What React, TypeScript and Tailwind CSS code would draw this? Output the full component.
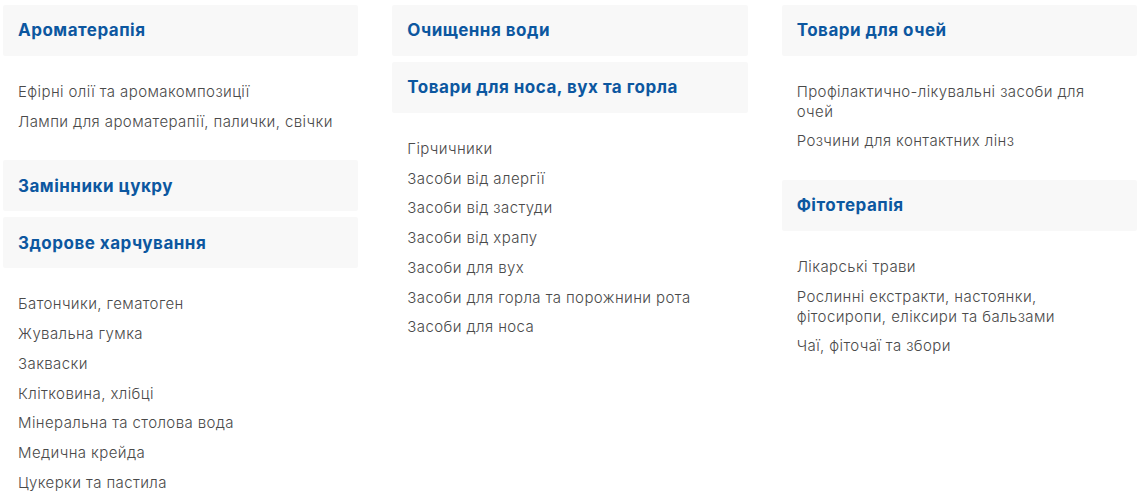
import React from 'react';

interface Category {
    title: string;
    items: string[];
}

const columns: Category[][] = [
    [
        {
            title: 'Ароматерапія',
            items: ['Ефірні олії та аромакомпозиції', 'Лампи для ароматерапії, палички, свічки'],
        },
        { title: 'Замінники цукру', items: [] },
        {
            title: 'Здорове харчування',
            items: [
                'Батончики, гематоген',
                'Жувальна гумка',
                'Закваски',
                'Клітковина, хлібці',
                'Мінеральна та столова вода',
                'Медична крейда',
                'Цукерки та пастила',
            ],
        },
    ],
    [
        { title: 'Очищення води', items: [] },
        {
            title: 'Товари для носа, вух та горла',
            items: [
                'Гірчичники',
                'Засоби від алергії',
                'Засоби від застуди',
                'Засоби від храпу',
                'Засоби для вух',
                'Засоби для горла та порожнини рота',
                'Засоби для носа',
            ],
        },
    ],
    [
        {
            title: 'Товари для очей',
            items: ['Профілактично-лікувальні засоби для очей', 'Розчини для контактних лінз'],
        },
        {
            title: 'Фітотерапія',
            items: [
                'Лікарські трави',
                'Рослинні екстракти, настоянки, фітосиропи, еліксири та бальзами',
                'Чаї, фіточаї та збори',
            ],
        },
    ],
];

const CategoryBlock: React.FC<{ cat: Category }> = ({ cat }) => (
    <div className="mb-[6px]">
        <div className="h-[51px] bg-[#f8f8f8] rounded-[2px] px-[15px] flex items-center pt-[1px]">
            <a className="text-[17px] font-bold tracking-[0.5px] text-[#0c57a0] cursor-pointer">{cat.title}</a>
        </div>
        {cat.items.length > 0 && (
            <ul className="pt-[26px] pb-[23px] px-[15px] flex flex-col gap-[10px]">
                {cat.items.map((item) => (
                    <li
                        key={item}
                        className="text-[15px] leading-[19.7px] font-light tracking-[0.4px] text-[#4a4a4a]"
                    >
                        {item}
                    </li>
                ))}
            </ul>
        )}
    </div>
);

export default function App() {
    return (
        <div
            className="w-[1142px] h-[496px] bg-white overflow-hidden pl-[3px] pr-[5px] pt-[5px] grid grid-cols-3 gap-x-[34px] items-start"
            style={{ fontFamily: 'Inter, "Noto Sans", sans-serif' }}
        >
            {columns.map((col, i) => (
                <div key={i} className="flex flex-col">
                    {col.map((cat) => (
                        <CategoryBlock key={cat.title} cat={cat} />
                    ))}
                </div>
            ))}
        </div>
    );
}
